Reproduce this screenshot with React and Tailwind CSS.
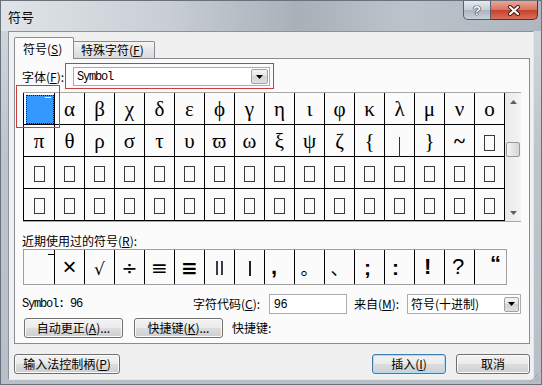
import React from "react";

const cjk = "font-['Noto_Sans_CJK_SC',sans-serif]";

const row1 = ["α", "β", "χ", "δ", "ε", "ϕ", "γ", "η", "ι", "φ", "κ", "λ", "μ", "ν", "ο"];
const row2 = ["π", "θ", "ρ", "σ", "τ", "υ", "ϖ", "ω", "ξ", "ψ", "ζ", "{", "bar", "}", "~", null];

const Tofu = () => <div className="w-[11px] h-[16px] border border-[#3a3a3a] mt-[2px]" />;

const Arrow = ({ up, color = "#000" }) => (
  <svg width="7" height="4" viewBox="0 0 7 4">
    <path d={up ? "M0 4 L3.5 0 L7 4 Z" : "M0 0 L7 0 L3.5 4 Z"} fill={color} />
  </svg>
);

const Btn = ({ children, className = "", focus }) => (
  <div
    className={`h-[20px] flex items-center justify-center rounded-[3px] border ${
      focus ? "border-[#3c7fb1] shadow-[inset_0_0_0_1px_#a8dcf7]" : "border-[#707070] shadow-[inset_0_0_0_1px_#fbfbfb]"
    } bg-[linear-gradient(to_bottom,#f2f2f2_0%,#ebebeb_50%,#dddddd_50%,#cfcfcf_100%)] ${cjk} text-[12px] leading-none text-black ${className}`}
  >
    {children}
  </div>
);

const DropBtn = ({ w }) => (
  <div
    className={`${w} flex items-center justify-center rounded-[2px] border border-[#a2a2a2] bg-[linear-gradient(to_bottom,#f4f4f4,#e4e4e4_50%,#d4d4d4_50%,#e0e0e0)]`}
  >
    <Arrow />
  </div>
);

const Cell = ({ first, children, className = "" }) => (
  <div
    className={`${first ? "w-[31px]" : "w-[30px]"} h-full border-r border-black flex items-center justify-center ${className}`}
  >
    {children}
  </div>
);

const greek = "font-['Liberation_Serif',serif] text-[21px] leading-none text-black pt-[2px]";
const mono = "font-['Liberation_Mono',monospace] text-[12px] tracking-[-1.2px] leading-none text-black";

export default function App() {
  return (
    <div className="relative w-[542px] h-[385px] overflow-hidden border border-[#69727c] bg-[linear-gradient(to_bottom,#d3d9df,#bcc4cc_40%,#b7bfc8)] flex flex-col">
      {/* title bar */}
      <div className="h-[30px] flex items-start bg-[linear-gradient(to_right,#e0e4e8,#c9cfd5_30%,#a9b0b8_55%,#bcc3ca_75%,#aeb6bf)]">
        <span className={`${cjk} text-[13px] leading-none text-black pl-[7px] pt-[9px]`}>符号</span>
        <div className="ml-auto mr-[3px] flex">
          <div className="w-[28px] h-[19px] border border-t-0 border-[#56606b] rounded-bl-[5px] bg-[linear-gradient(to_bottom,#e6eaef,#c6cdd5_50%,#aab3bd_50%,#c9d1da)] flex items-center justify-center">
            <span className="font-['Liberation_Sans',sans-serif] font-bold text-[13px] leading-none text-white [text-shadow:0_0_1px_#222,0_0_1px_#222,0_0_1px_#222]">
              ?
            </span>
          </div>
          <div className="w-[47px] h-[19px] border border-t-0 border-l-0 border-[#6b2a22] rounded-br-[5px] bg-[linear-gradient(to_bottom,#e8a698,#d6735f_50%,#c4412a_50%,#d7705a)] flex items-center justify-center">
            <svg width="14" height="11" viewBox="0 0 14 11">
              <path d="M3 2 L11 9 M11 2 L3 9" stroke="#3b1410" strokeWidth="4" strokeLinecap="round" />
              <path d="M3 2 L11 9 M11 2 L3 9" stroke="#ffffff" strokeWidth="2.2" strokeLinecap="round" />
            </svg>
          </div>
        </div>
      </div>

      {/* client area */}
      <div className="mx-[7px] h-[349px] bg-[#f0f0f0] border border-[#8a929a] border-r-[#e3e7ea] border-b-[#e3e7ea] flex flex-col pl-[5px] pr-[3px] pt-[5px]">
        {/* tabs */}
        <div className="flex items-end h-[21px]">
          <div className={`relative z-10 -mb-px w-[60px] h-[22px] border border-b-0 border-[#898c95] rounded-t-[2px] bg-[#fbfbfb] flex items-center pl-[8px] ${cjk} text-[12px] leading-none text-black`}>
            符号(<u>S</u>)
          </div>
          <div className={`w-[81px] h-[17px] border-t border-r border-[#898c95] rounded-tr-[2px] bg-[linear-gradient(to_bottom,#f4f4f4,#e6e6e6_50%,#dadada)] flex items-center pl-[7px] ${cjk} text-[12px] leading-none text-black`}>
            特殊字符(<u>F</u>)
          </div>
        </div>

        {/* panel */}
        <div className="w-[516px] h-[286px] border border-[#898c95] bg-[#fbfbfb] flex flex-col pl-[7px] pt-[8px]">
          {/* font row */}
          <div className="flex items-center h-[19px]">
            <span className={`w-[51px] ${cjk} text-[12px] leading-none text-black`}>
              字体(<u>F</u>):
            </span>
            <div className="w-[197px] h-[19px] border border-[#a5acb5] bg-white flex items-center justify-between pl-[3px] pr-[1px]">
              <span className={mono}>Symbol</span>
              <DropBtn w="w-[17px] h-[15px]" />
            </div>
          </div>

          {/* symbol grid */}
          <div className="mt-[6px] ml-[1px] w-[498px] flex border-t border-b border-[#a8a8a8]">
            <div className="w-[482px] border-l border-black flex flex-col">
              <div className="flex h-[32px] border-b border-black">
                <div className="w-[31px] h-full border-r border-black pl-[2px] pt-[2px] flex">
                  <div className="relative flex-1 bg-[#3399ff] border border-dotted border-[#1a1a1a]">
                    <div className="absolute top-[1px] right-[2px] w-[6px] h-[1px] bg-white" />
                  </div>
                </div>
                {row1.map((c, i) => (
                  <Cell key={i} className={greek}>
                    {c}
                  </Cell>
                ))}
              </div>
              <div className="flex h-[32px] border-b border-black">
                {row2.map((c, i) => (
                  <Cell key={i} first={i === 0} className={greek}>
                    {c === null ? (
                      <Tofu />
                    ) : c === "bar" ? (
                      <div className="w-[1px] h-[20px] mt-[10px] bg-[#7a1414]" />
                    ) : c === "~" ? (
                      <span className="font-bold">~</span>
                    ) : (
                      c
                    )}
                  </Cell>
                ))}
              </div>
              {[0, 1].map((r) => (
                <div key={r} className="flex h-[32px] border-b border-black">
                  {Array.from({ length: 16 }).map((_, i) => (
                    <Cell key={i} first={i === 0}>
                      <Tofu />
                    </Cell>
                  ))}
                </div>
              ))}
            </div>
            {/* scrollbar */}
            <div className="w-[16px] bg-[linear-gradient(to_right,#e9e9e9,#f4f4f4)] flex flex-col items-center">
              <div className="h-[17px] flex items-center justify-center">
                <Arrow up color="#606060" />
              </div>
              <div className="mt-[32px] w-[14px] h-[15px] rounded-[2px] border border-[#979797] bg-[linear-gradient(to_right,#f6f6f6,#e4e4e4_50%,#d6d6d6)]" />
              <div className="mt-auto h-[17px] flex items-center justify-center">
                <Arrow color="#606060" />
              </div>
            </div>
          </div>

          {/* recent */}
          <div className={`mt-[12px] h-[14px] ${cjk} text-[12px] leading-[14px] text-black`}>
            近期使用过的符号(<u>R</u>):
          </div>
          <div className="mt-[1px] ml-[1px] w-[484px] h-[36px] border border-[#a0a0a0] flex">
            <div className="w-[31px] h-full border-r border-black flex justify-end items-start">
              <div className="w-[6px] h-[1px] bg-black mt-[4px]" />
            </div>
            <Cell className="font-['Liberation_Sans',sans-serif] text-[24px] leading-none text-black">×</Cell>
            <Cell className="font-['DejaVu_Sans',sans-serif] text-[17px] leading-none text-black pt-[4px]">√</Cell>
            <Cell className="font-['DejaVu_Sans',sans-serif] text-[19px] leading-none text-black pt-[2px]">÷</Cell>
            <Cell className="font-['DejaVu_Sans',sans-serif] text-[20px] leading-none text-black pt-[2px]">≡</Cell>
            <Cell className="font-['DejaVu_Sans',sans-serif] font-bold text-[20px] leading-none text-black pt-[2px]">≡</Cell>
            <Cell className="gap-[3px] pt-[2px]">
              <div className="w-[2px] h-[14px] bg-[#3a3a48]" />
              <div className="w-[2px] h-[14px] bg-[#3a3a48]" />
            </Cell>
            <Cell className="pt-[2px]">
              <div className="w-[2px] h-[15px] bg-[#222]" />
            </Cell>
            <Cell className="justify-start pl-[6px] font-['Liberation_Sans',sans-serif] font-bold text-[22px] leading-none text-black">
              ,
            </Cell>
            <Cell className={`${cjk} text-[18px] leading-none text-black`}>。</Cell>
            <Cell className={`${cjk} text-[18px] leading-none text-black`}>、</Cell>
            <Cell className="justify-start pl-[9px] font-['Liberation_Sans',sans-serif] font-bold text-[21px] leading-none text-black">
              ;
            </Cell>
            <Cell className="justify-start pl-[7px] font-['Liberation_Sans',sans-serif] font-bold text-[21px] leading-none text-black">
              :
            </Cell>
            <Cell className="justify-start pl-[9px] font-['Liberation_Sans',sans-serif] font-bold text-[22px] leading-none text-black">
              !
            </Cell>
            <Cell className="justify-start pl-[7px] font-['Liberation_Sans',sans-serif] text-[22px] leading-none text-black">
              ?
            </Cell>
            <div className="flex-1 h-full flex items-start justify-end pr-[5px] pt-[3px] font-['Liberation_Sans',sans-serif] font-bold text-[22px] leading-none text-black">
              “
            </div>
          </div>

          {/* code row */}
          <div className="mt-[9px] h-[20px] flex items-center">
            <span className={`w-[171px] ${mono}`}>Symbol: 96</span>
            <span className={`w-[76px] ${cjk} text-[12px] leading-none text-black`}>
              字符代码(<u>C</u>):
            </span>
            <div className="w-[78px] h-[20px] border border-[#abadb3] bg-white flex items-center pl-[4px] font-['Liberation_Sans',sans-serif] text-[12px] leading-none text-black">
              96
            </div>
            <span className={`ml-[7px] w-[53px] ${cjk} text-[12px] leading-none text-black`}>
              来自(<u>M</u>):
            </span>
            <div className="w-[114px] h-[20px] border border-[#abadb3] bg-white flex items-center justify-between pl-[3px] pr-[1px]">
              <span className={`${cjk} text-[12px] leading-none text-black`}>符号(十进制)</span>
              <DropBtn w="w-[15px] h-[15px]" />
            </div>
          </div>

          {/* buttons row */}
          <div className="mt-[4px] flex items-center">
            <Btn className="ml-[2px] w-[99px]">
              自动更正(<u>A</u>)...
            </Btn>
            <Btn className="ml-[11px] w-[89px]">
              快捷键(<u>K</u>)...
            </Btn>
            <span className={`ml-[9px] ${cjk} text-[12px] leading-none text-black`}>快捷键:</span>
          </div>
        </div>

        {/* bottom buttons */}
        <div className="mt-[10px] flex">
          <Btn className="w-[106px]">
            输入法控制柄(<u>P</u>)
          </Btn>
          <Btn focus className="ml-auto w-[74px]">
            插入(<u>I</u>)
          </Btn>
          <Btn className="ml-[10px] w-[74px]">取消</Btn>
        </div>
      </div>

      {/* annotation boxes */}
      <div className="absolute left-[64px] top-[62px] w-[209px] h-[26px] border border-[#c9403b]" />
      <div className="absolute left-[15px] top-[84px] w-[44px] h-[43px] border border-[#c9403b]" />

      {/* resize grip */}
      <svg className="absolute right-[1px] bottom-[1px]" width="10" height="10" viewBox="0 0 10 10">
        <path d="M9 3 L3 9 M9 6 L6 9 M9 0 L0 9" stroke="#a0a7ae" strokeWidth="1" />
      </svg>
    </div>
  );
}
